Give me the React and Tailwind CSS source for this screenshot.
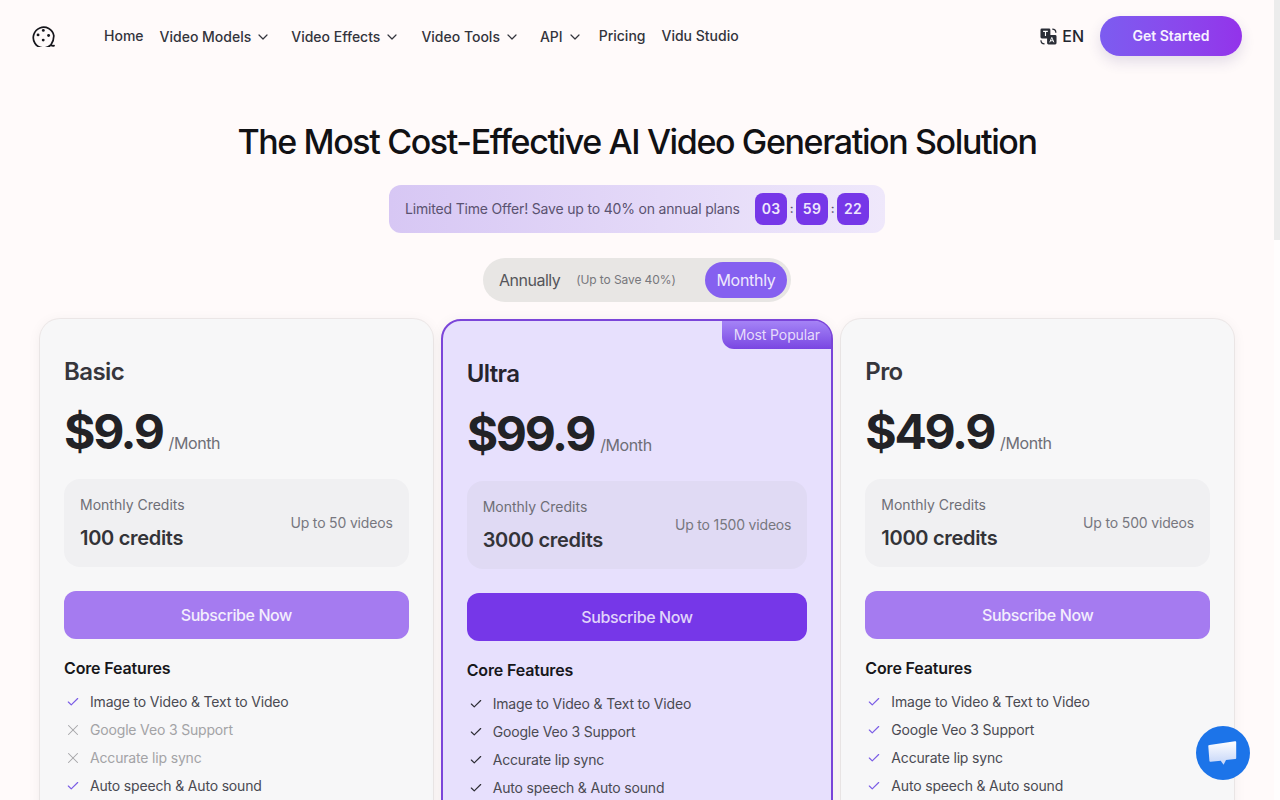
import React from "react";
import { ChevronDown, Check, X } from "lucide-react";

const FONT = "font-['Inter','Noto_Sans',sans-serif]";

function Logo() {
  return (
    <svg width="23" height="23" viewBox="0 0 24 24" fill="none" className="shrink-0 -translate-y-[1px]">
      <path d="M23 22.600c-1.100.3-2.300.1-3.300-.7A10.800 10.800 0 1 1 22.800 12.300c0 3.500-1.200 6.900-3.100 9.600" stroke="#16161c" strokeWidth="1.800" strokeLinecap="round" />
      <circle cx="11.800" cy="6.700" r="1.500" fill="#16161c" />
      <circle cx="6.300" cy="11.400" r="1.500" fill="#16161c" />
      <circle cx="17.300" cy="12" r="1.500" fill="#16161c" />
      <circle cx="11.700" cy="16.800" r="1.500" fill="#16161c" />
    </svg>
  );
}

function TranslateIcon() {
  return (
    <svg width="17" height="17" viewBox="0 0 18 18" fill="none" className="shrink-0">
      <rect x="0.500" y="0.500" width="10.500" height="10.500" rx="1.500" fill="#2a2d36" />
      <rect x="7.500" y="7.500" width="10" height="10" rx="1.500" fill="#2a2d36" />
      <path d="M3.300 3.600h5M5.800 3.600v5" stroke="#fff" strokeWidth="1.200" />
      <path d="M10.300 15.200l2.200-5.200 2.200 5.200M11.100 13.500h2.800" stroke="#fff" strokeWidth="1" />
      <path d="M1 13c0 2 1.500 3.800 3.800 3.800M13 1.200c2 0 3.800 1.500 3.800 3.800" stroke="#2a2d36" strokeWidth="1.300" />
    </svg>
  );
}

function ChatIcon() {
  return (
    <svg width="32" height="28" viewBox="0 0 32 28" fill="none">
      <defs>
        <linearGradient id="chatfill" x1="0" y1="0" x2="0" y2="1">
          <stop offset="0" stopColor="#ffffff" />
          <stop offset="1" stopColor="#c3d4f8" />
        </linearGradient>
      </defs>
      <path d="M2.500 6 28 2.200c.7-.1 1.200.3 1.200 1V19c0 .7-.4 1-1 1.100l-9.200.9-2.400 4.800-2.900-4-10 .9c-.8 0-1.300-.3-1.300-1L1.300 7.200c0-.7.500-1.100 1.200-1.200z" fill="url(#chatfill)" />
    </svg>
  );
}

function NavLink({ label, chevron, className = "" }) {
  return (
    <a className={`flex items-center gap-1 text-sm font-medium text-[#33343c] ${className}`}>
      <span>{label}</span>
      {chevron && <ChevronDown size={16} strokeWidth={1.800} />}
    </a>
  );
}

function Feature({ label, on, darkCheck }) {
  return (
    <li className="flex h-7 items-center">
      <span className="flex w-[26px] shrink-0 pl-[2px]">
        {on ? (
          <Check size={14} strokeWidth={2} className={darkCheck ? "text-[#2c2c33]" : "text-[#7a5ce6]"} />
        ) : (
          <X size={18} strokeWidth={1.400} className="-mx-[2px] text-[#a5a5a8]" />
        )}
      </span>
      <span className={`text-sm tracking-[-0.17px] ${on ? "text-[#4a4a52]" : "text-[#a3a3a6]"}`}>{label}</span>
    </li>
  );
}

function Card({ plan }) {
  const featured = plan.featured;
  return (
    <section
      className={
        featured
          ? "relative rounded-[20px] border-2 border-[#7b45d9] bg-[#e7e0fd] px-6 pt-[37px] shadow-[0_2px_14px_rgba(0,0,0,0.06)]"
          : "relative rounded-[20px] bg-[#f7f7f8] px-6 pt-[37px] shadow-[0_0_0_1px_rgba(60,60,60,0.08),0_2px_14px_rgba(0,0,0,0.06)]"
      }
    >
      {featured && (
        <div className="absolute right-0 top-0 flex h-7 w-[109px] items-center justify-center rounded-tr-[16px] rounded-bl-xl bg-gradient-to-b from-[#a583f6] to-[#7a45e2] text-sm tracking-[-0.1px] text-[#e6dcfb]">
          Most Popular
        </div>
      )}
      <h2 className={`text-2xl leading-8 font-semibold tracking-[-0.6px] ${featured ? "text-[#26242e]" : "text-[#36363c]"}`}>{plan.name}</h2>
      <div className="mt-[15px] flex items-baseline gap-[6px]">
        <span className="-translate-y-px text-5xl leading-[60px] font-bold tracking-[-2.3px] text-[#222226]">{plan.price}</span>
        <span className="-translate-y-px text-base tracking-[-0.4px] text-[#6e6e76]">/Month</span>
      </div>
      <div className={`mt-[16px] flex h-[88px] items-center justify-between rounded-2xl px-4 ${featured ? "bg-[#e0daf4]" : "bg-[#f0f0f2]"}`}>
        <div>
          <div className="text-sm leading-5 text-[#6e6e76]">Monthly Credits</div>
          <div className="mt-[9px] text-xl leading-7 font-semibold tracking-[-0.3px] text-[#333338]">{plan.credits}</div>
        </div>
        <div className="text-sm tracking-[-0.17px] text-[#77777f]">{plan.videos}</div>
      </div>
      <button
        className={`mt-6 block h-12 w-full rounded-xl text-base font-medium tracking-[-0.4px] ${
          featured ? "bg-[#7637e8] text-[#e0d4fa]" : "bg-[#a57bf0] text-[#f3eefd]"
        }`}
      >
        Subscribe Now
      </button>
      <h3 className="mt-[17px] text-base leading-6 font-semibold tracking-[-0.15px] text-[#17171b]">Core Features</h3>
      <ul className="mt-[8px] pb-10">
        {plan.features.map(([label, on]) => (
          <Feature key={label} label={label} on={on} darkCheck={featured} />
        ))}
      </ul>
    </section>
  );
}

const names = ["Image to Video & Text to Video", "Google Veo 3 Support", "Accurate lip sync", "Auto speech & Auto sound"];
const plans = [
  { name: "Basic", price: "$9.9", credits: "100 credits", videos: "Up to 50 videos", features: names.map((n, i) => [n, i === 0 || i === 3]) },
  { name: "Ultra", price: "$99.9", credits: "3000 credits", videos: "Up to 1500 videos", featured: true, features: names.map((n) => [n, true]) },
  { name: "Pro", price: "$49.9", credits: "1000 credits", videos: "Up to 500 videos", features: names.map((n) => [n, true]) },
];

export default function App() {
  return (
    <div className={`flex h-[800px] overflow-hidden bg-[#fffafa] ${FONT}`}>
      <main className="relative min-w-0 flex-1">
        <header className="flex h-[72px] items-center pl-8 pr-[32px]">
          <Logo />
          <nav className="ml-[49px] flex translate-y-px items-center">
            <NavLink label="Home" className="-translate-y-px" />
            <NavLink label="Video Models" chevron className="ml-4" />
            <NavLink label="Video Effects" chevron className="ml-5" />
            <NavLink label="Video Tools" chevron className="ml-[21px]" />
            <NavLink label="API" chevron className="ml-5" />
            <NavLink label="Pricing" className="ml-4 -translate-y-px" />
            <NavLink label="Vidu Studio" className="ml-4 -translate-y-px" />
          </nav>
          <div className="ml-auto flex items-center">
            <TranslateIcon />
            <span className="ml-[5px] text-base font-medium text-[#23262f]">EN</span>
            <button className="ml-4 h-10 w-[142px] rounded-full bg-gradient-to-r from-[#7c5cf0] to-[#9333ea] text-sm font-semibold text-[#f7f2ff] shadow-[0_6px_14px_rgba(60,40,120,0.14)]">
              Get Started
            </button>
          </div>
        </header>

        <h1 className="mt-[46px] text-center text-[34px] leading-12 font-medium tracking-[-1.38px] text-[#111114]">
          The Most Cost-Effective AI Video Generation Solution
        </h1>

        <div className="mt-[19px] flex justify-center">
          <div className="flex h-12 w-[496px] items-center rounded-xl bg-gradient-to-r from-[#d7c7f4] to-[#efe8fb] pl-4 text-sm tracking-[-0.18px] text-[#5a5270]">
            <span>Limited Time Offer! Save up to 40% on annual plans</span>
            <div className="ml-auto mr-4 flex items-center text-[#5a5270]">
              {["03", "59", "22"].map((v, i) => (
                <React.Fragment key={v}>
                  {i > 0 && <span className="flex w-[9px] justify-center text-xs font-semibold">:</span>}
                  <span className="flex size-8 items-center justify-center rounded-lg bg-[#7637e8] text-sm font-semibold tracking-[0.3px] text-[#eee6fd]">{v}</span>
                </React.Fragment>
              ))}
            </div>
          </div>
        </div>

        <div className="mt-[25px] flex justify-center">
          <div className="flex h-11 w-[308px] items-center rounded-full bg-[#e8e6e4] pl-4 pr-1">
            <span className="text-base tracking-[-0.5px] text-[#55555a]">Annually</span>
            <span className="ml-4 text-xs tracking-[-0.1px] text-[#77777c]">(Up to Save 40%)</span>
            <span className="ml-auto flex h-9 w-[82px] items-center justify-center rounded-full bg-[#8560f0] text-base tracking-[-0.3px] text-[#efe9fd]">Monthly</span>
          </div>
        </div>

        <div className="mx-10 mt-[17px] grid grid-cols-3 gap-2">
          {plans.map((p) => (
            <Card key={p.name} plan={p} />
          ))}
        </div>

        <button className="absolute bottom-5 right-6 flex size-[54px] items-center justify-center rounded-full bg-[#1c74e9]">
          <ChatIcon />
        </button>
      </main>
      <aside className="w-[6px] shrink-0 bg-[#fffdfd]">
        <div className="h-[240px] bg-[#ececec]" />
      </aside>
    </div>
  );
}
